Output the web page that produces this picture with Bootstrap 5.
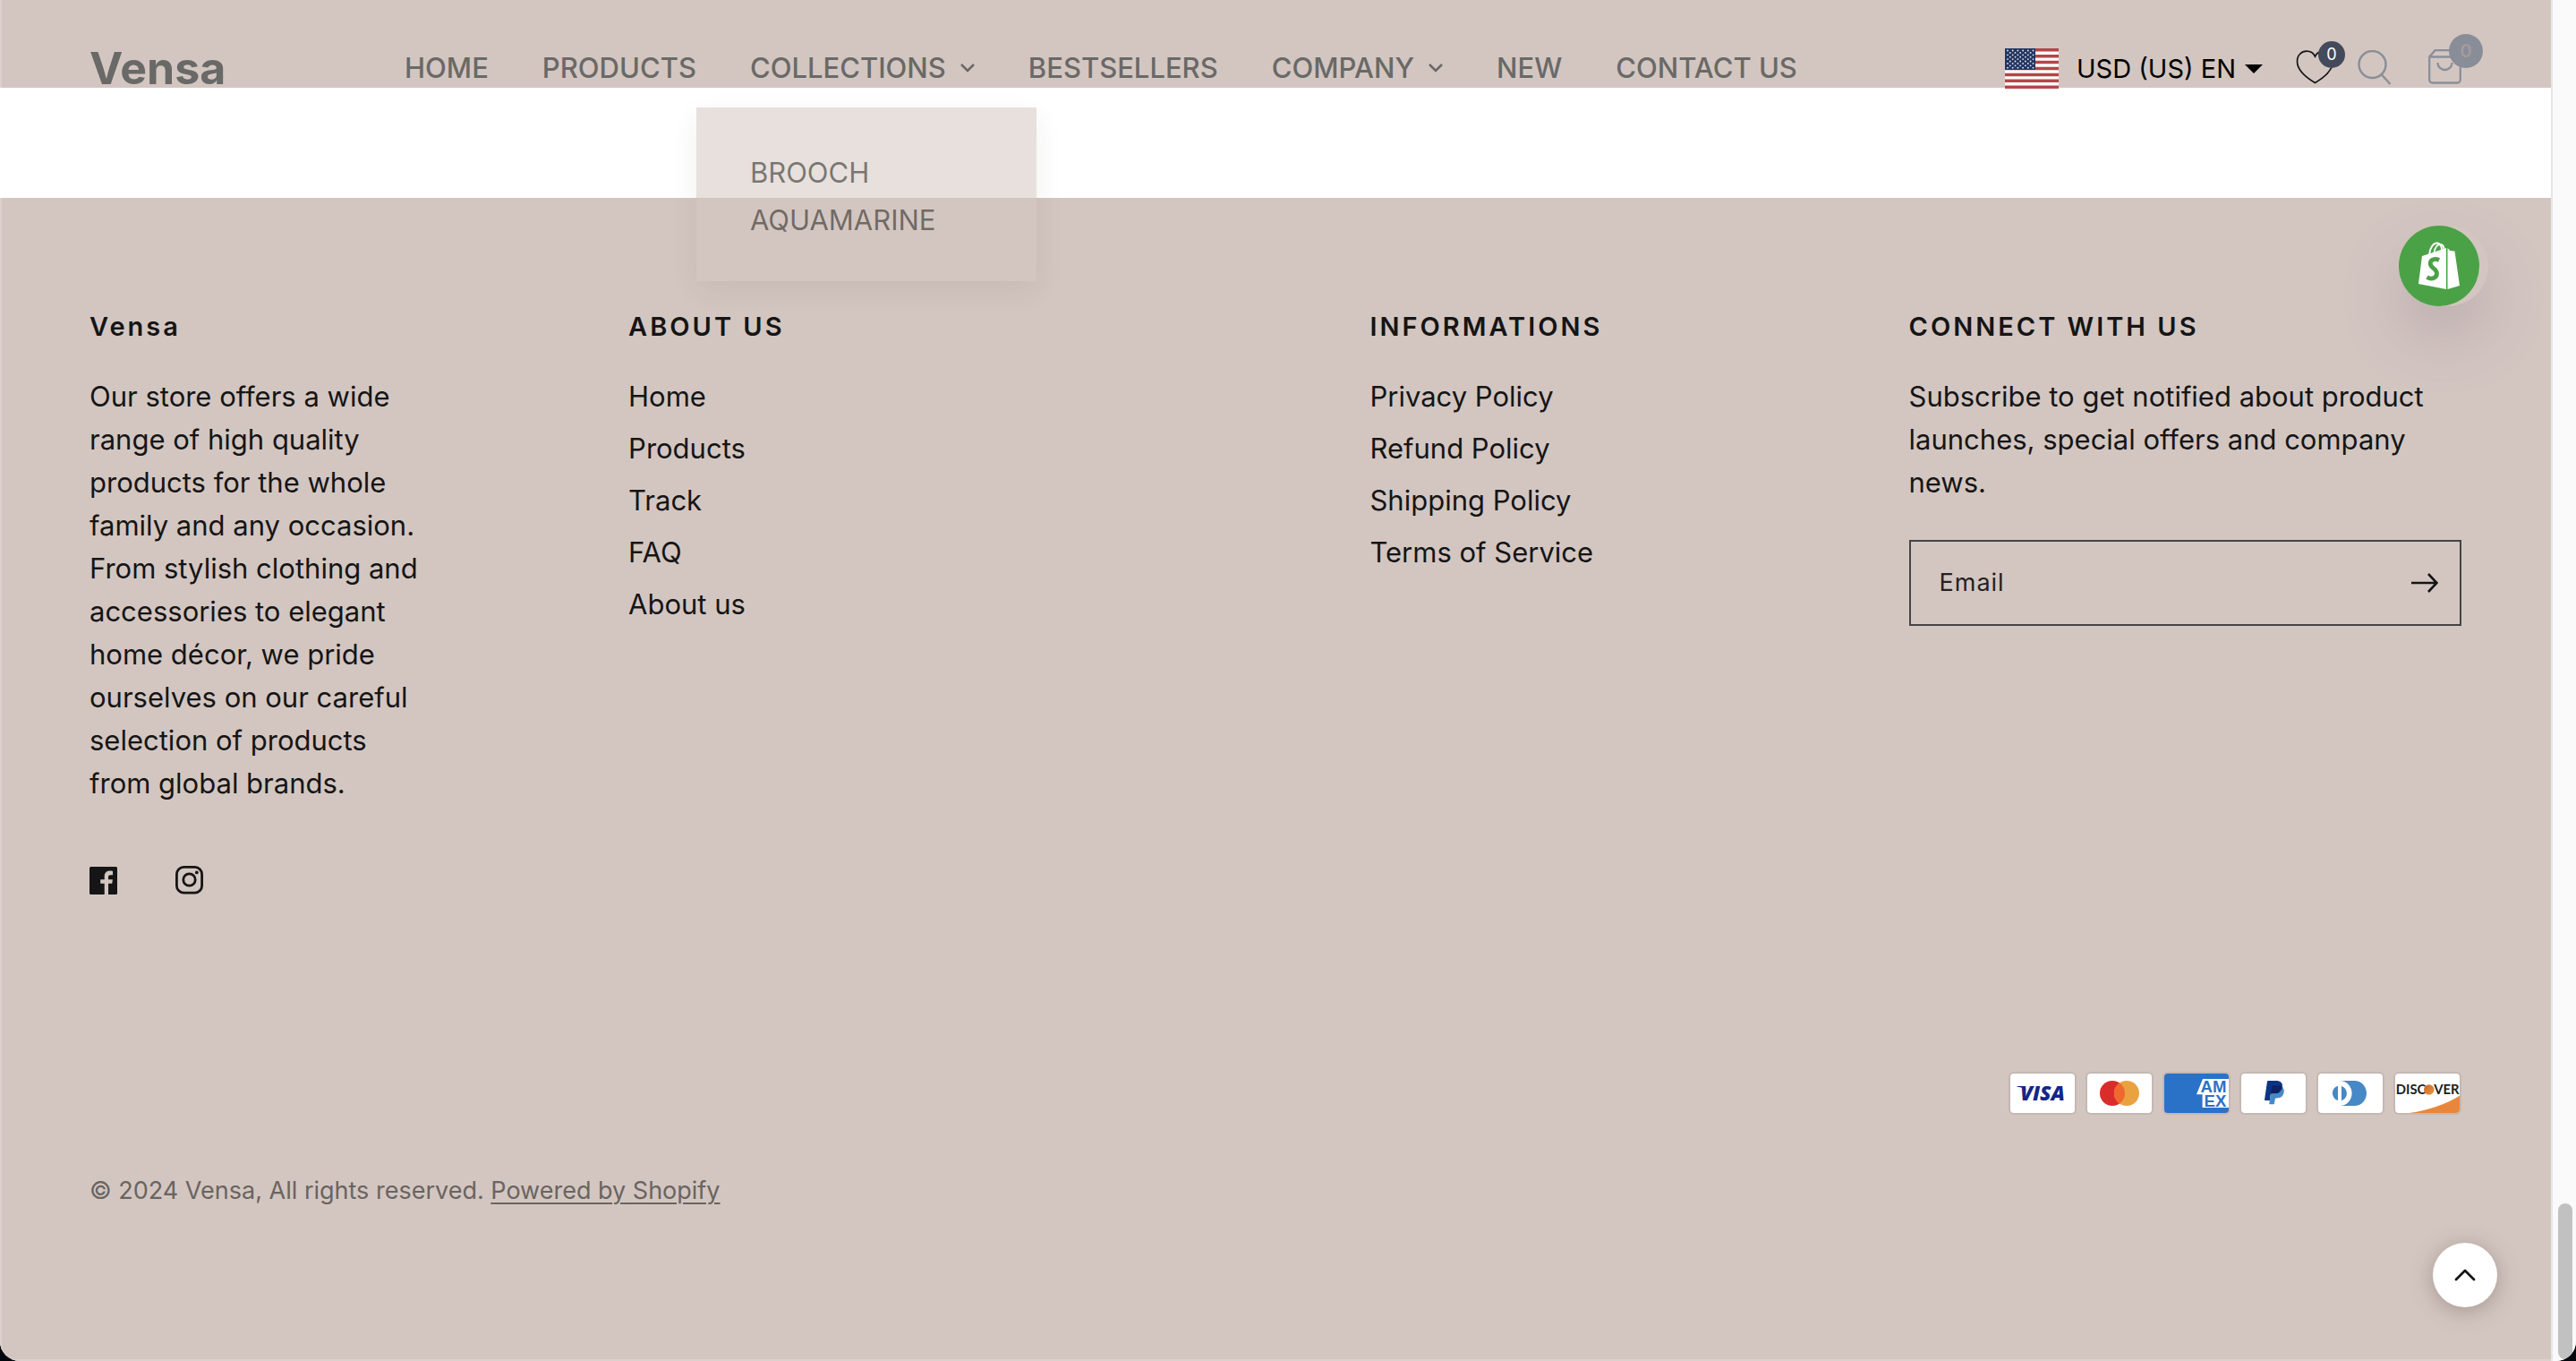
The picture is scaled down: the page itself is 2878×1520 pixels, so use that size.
<!DOCTYPE html>
<html lang="en">
<head>
<meta charset="utf-8">
<meta name="viewport" content="width=device-width, initial-scale=1">
<title>Vensa</title>
<link href="https://cdn.jsdelivr.net/npm/bootstrap@5.3.0/dist/css/bootstrap.min.css" rel="stylesheet">
<style>
  :root { --sand: #d3c6c1; --ink: #151515; --muted-ink: #696967; --edge: #dcd1cd; }
  body { background: #00070d; color: var(--ink); font-family: Inter, "Open Sans", sans-serif; font-size: 31px; line-height: 48px; }
  a { color: inherit; text-decoration: none; }
  svg { display: block; flex: none; }
  .shell { min-height: 100vh; border-radius: 0 0 22px 22px; background: #fff; overflow: hidden; }
  .site-top { height: 98px; padding: 54px 75px 0 98px; background: var(--sand); border-left: 2px solid var(--edge); color: var(--muted-ink); z-index: 5; }
  .site-top > * { height: 44px; }
  .site-logo { font-size: 50px; font-weight: 700; width: 352px; }
  .main-menu { gap: 60px; font-weight: 500; }
  .main-menu a, .main-menu button { white-space: nowrap; }
  .plain-btn { border: 0; background: none; padding: 0; color: inherit; font: inherit; }
  .sub-menu { display: block; position: absolute; left: -60px; top: 68px; width: 380px; margin: 0; padding: 46px 60px 42px; border: 0; border-radius: 0;
    background: rgba(211, 198, 193, .55); box-shadow: 0 10px 30px rgba(60, 40, 30, .07); color: rgba(25, 25, 20, .55); font-size: 31px; font-weight: 400; line-height: 53px; }
  .locale { color: #000; font-size: 29px; }
  .locale select { appearance: none; border: 0; background: none; padding: 0; color: inherit; line-height: 40px; width: 188px; margin-left: 20px; }
  .wish-btn { margin: 2px 0 0 37px; }
  .find-btn { margin: 2px 0 0 25px; }
  .cart-btn { margin: 1px 25px 0 41px; }
  .count-dot { position: absolute; border-radius: 50%; display: flex; align-items: center; justify-content: center; }
  .wish-dot { left: 25px; top: -10px; width: 30px; height: 30px; background: #434a5b; color: #fff; font-size: 18px; }
  .cart-dot { left: 23px; top: -17px; width: 38px; height: 38px; background: #898d97; color: #a39b9d; font-size: 20px; font-weight: 600; }
  .blank-band { height: 123px; }
  .site-foot { background: var(--sand); border-left: 2px solid var(--edge); border-bottom: 2px solid var(--edge); padding: 126px 100px 60px 98px; }
  .fcol-a, .fcol-c { width: 22.72%; }
  .fcol-b { width: 31.26%; }
  .fcol-d { width: 23.3%; }
  .site-foot h2 { font-size: 29px; font-weight: 600; line-height: 36px; letter-spacing: 3px; margin-bottom: 36px; }
  .story { max-width: 380px; margin-bottom: 68px; }
  .link-stack { gap: 10px; }
  .socials { gap: 65px; }
  .mail-box { margin-top: 40px; height: 96px; border: 2px solid #444; padding: 0 24px 0 32px; }
  .mail-box input { border: 0; background: none; outline: 0; min-width: 0; font-size: 27px; letter-spacing: 1px; padding: 0; color: var(--ink); }
  .mail-box input::placeholder { color: #222; opacity: 1; }
  .pay-row { gap: 10px; margin-top: 198px; margin-bottom: 64px; }
  .legal { font-size: 27px; line-height: 42px; color: #6a645f; }
  .legal a { text-decoration: underline; text-decoration-thickness: 2px; text-underline-offset: 4px; }
  .shop-bubble { position: absolute; right: 70px; top: 252px; width: 100px; height: 90px; border-radius: 45px; box-shadow: 0 34px 64px rgba(140, 120, 140, .3); z-index: 6; }
  .shop-bubble button { width: 90px; height: 90px; border-radius: 50%; background: #4ba246; }
  .to-top { position: fixed; right: 88px; bottom: 60px; width: 72px; height: 72px; border-radius: 50%; background: #fff; box-shadow: 0 4px 24px rgba(80, 60, 50, .35); z-index: 6; }
  .scroll-rail { width: 28px; background: #fafafa; border-left: 2px solid #e6e6e6; padding: 0 4px 2px 6px; }
  .scroll-thumb { height: 174px; border-radius: 8px; background: #c1c1c1; }
</style>
</head>
<body>
<div class="shell d-flex">
  <div class="position-relative flex-grow-1 d-flex flex-column">

    <header class="site-top position-relative d-flex align-items-start">
      <a class="site-logo d-flex align-items-center" href="#">Vensa</a>
      <nav class="main-menu d-flex align-items-center" aria-label="Main">
        <a href="#">HOME</a>
        <a href="#">PRODUCTS</a>
        <div class="position-relative">
          <button class="plain-btn d-flex align-items-center" type="button" aria-expanded="true">COLLECTIONS
            <svg class="ms-3" width="16" height="10" viewBox="0 0 16 10" fill="none" stroke="currentColor" stroke-width="2.6"><path d="M1 1l7 7 7-7"/></svg></button>
          <div class="sub-menu">
            <a class="d-block" href="#">BROOCH</a>
            <a class="d-block" href="#">AQUAMARINE</a>
          </div>
        </div>
        <a href="#">BESTSELLERS</a>
        <button class="plain-btn d-flex align-items-center" type="button">COMPANY
          <svg class="ms-3" width="16" height="10" viewBox="0 0 16 10" fill="none" stroke="currentColor" stroke-width="2.6"><path d="M1 1l7 7 7-7"/></svg></button>
        <a href="#">NEW</a>
        <a href="#">CONTACT US</a>
      </nav>

      <div class="d-flex align-items-start ms-auto">
        <div class="locale d-flex align-items-center">
          <svg width="60" height="45" viewBox="0 0 60 45" aria-hidden="true">
            <rect width="60" height="45" fill="#fff"/>
            <path d="M0 1.750h60M0 8.700h60M0 15.600h60M0 22.500h60M0 29.400h60M0 36.300h60M0 43.250h60" stroke="#b24648" stroke-width="3.460"/>
            <rect width="34" height="24" fill="#24365f"/>
            <g stroke="#e8ebf2" stroke-width="1.800" stroke-linecap="round" stroke-dasharray="0 5.700"><path d="M3 2.500h30M3 7.300h30M3 12.100h30M3 16.900h30M3 21.700h30"/><path d="M5.800 4.900h26M5.800 9.700h26M5.800 14.500h26M5.800 19.300h26"/></g>
          </svg>
          <select id="locale" aria-label="Currency and language"><option>USD (US) EN</option></select>
          <svg width="20" height="10" viewBox="0 0 20 10"><path d="M0 0h20L10 10z"/></svg>
        </div>
        <button class="wish-btn plain-btn position-relative" type="button" aria-label="Wishlist">
          <svg width="42" height="38" viewBox="0 0 42 38" fill="none" stroke="#151515" stroke-width="1.700"><path d="M21.500 36.500C13 31.500 1.500 23.500 1.500 12.500 1.500 5.500 6.500 1.200 12 1.200c4 0 7.500 1.800 9.500 5.800 2-4 5.500-5.800 9.500-5.800 5.500 0 10.500 4.300 10.500 11.300 0 11-11.500 19-20 24z"/></svg>
          <span class="count-dot wish-dot">0</span>
        </button>
        <button class="find-btn plain-btn" type="button" aria-label="Search">
          <svg width="40" height="40" viewBox="0 0 40 40" fill="none" stroke="#8a8f99" stroke-width="2.500"><circle cx="18.500" cy="16" r="15"/><path d="M28.500 27l10 11"/></svg>
        </button>
        <button class="cart-btn plain-btn position-relative" type="button" aria-label="Cart">
          <svg width="37" height="39" viewBox="0 0 37 39" fill="none" stroke="#8a8f99" stroke-width="2.300"><path d="M1.200 8.500v25.500a3.500 3.500 0 003.500 3.500h27.600a3.500 3.500 0 003.500-3.500V8.500L30 1.200H7.500zM1.200 8.500h34.600M10.500 15a8 8 0 0016 0"/></svg>
          <span class="count-dot cart-dot">0</span>
        </button>
      </div>
    </header>

    <main class="blank-band"></main>

    <footer class="site-foot flex-grow-1">
      <div class="d-flex align-items-start">
        <section class="fcol-a">
          <h2>Vensa</h2>
          <p class="story">Our store offers a wide range of high quality products for the whole family and any occasion. From stylish clothing and accessories to elegant home décor, we pride ourselves on our careful selection of products from global brands.</p>
          <div class="socials d-flex">
            <a href="#" aria-label="Facebook"><svg width="31" height="32" viewBox="0 0 31 32"><path fill="#151515" fill-rule="evenodd" d="M1.500 1h28A1.500 1.500 0 0131 2.500v28a1.500 1.500 0 01-1.500 1.500H21V19.800h4.200l.7-4.500H21v-2.800c0-1.500.8-2.300 2.400-2.300H26V5.900c-1-.3-2-.4-3.200-.4-4 0-6.100 2.500-6.100 6.300v3.500h-4.500v4.500h4.500V32H1.500A1.500 1.500 0 010 30.500v-28A1.500 1.500 0 011.500 1z"/></svg></a>
            <a href="#" aria-label="Instagram"><svg width="31" height="32" viewBox="0 0 31 32" fill="none" stroke="#151515" stroke-width="2.800"><rect x="1.400" y="1.400" width="28.200" height="28.800" rx="8"/><circle cx="15.500" cy="15.500" r="6.700"/><circle cx="23.800" cy="7.400" r="1.900" fill="#151515" stroke="none"/></svg></a>
          </div>
        </section>
        <section class="fcol-b">
          <h2>ABOUT US</h2>
          <div class="link-stack d-flex flex-column align-items-start">
            <a href="#">Home</a><a href="#">Products</a><a href="#">Track</a><a href="#">FAQ</a><a href="#">About us</a>
          </div>
        </section>
        <section class="fcol-c">
          <h2>INFORMATIONS</h2>
          <div class="link-stack d-flex flex-column align-items-start">
            <a href="#">Privacy Policy</a><a href="#">Refund Policy</a><a href="#">Shipping Policy</a><a href="#">Terms of Service</a>
          </div>
        </section>
        <section class="fcol-d">
          <h2>CONNECT WITH US</h2>
          <p class="mb-0">Subscribe to get notified about product launches, special offers and company news.</p>
          <form class="mail-box d-flex align-items-center">
            <input class="flex-grow-1" type="email" placeholder="Email" aria-label="Email">
            <button class="plain-btn" type="button" aria-label="Subscribe"><svg width="30" height="22" viewBox="0 0 30 22" fill="none" stroke="#151515" stroke-width="2.600"><path d="M0 11h28M19 1l9.500 10L19 21"/></svg></button>
          </form>
        </section>
      </div>

      <div class="pay-row d-flex justify-content-end">
        <svg width="76" height="48" viewBox="0 0 38 24" role="img" aria-label="Visa"><rect width="38" height="24" rx="3" opacity=".07"/><rect x="1" y="1" width="36" height="22" rx="2" fill="#fff"/><text x="6.500" y="16" font-family="Open Sans, sans-serif" font-size="11.400" font-weight="800" font-style="italic" fill="#142688">VISA</text><path d="M4.800 8h4.400l.6 2.400C8.500 9 7 8.600 4.800 8.400z" fill="#142688"/></svg>
        <svg width="76" height="48" viewBox="0 0 38 24" role="img" aria-label="Mastercard"><rect width="38" height="24" rx="3" opacity=".07"/><rect x="1" y="1" width="36" height="22" rx="2" fill="#fff"/><circle cx="15" cy="12" r="7" fill="#d92d2c"/><circle cx="23" cy="12" r="7" fill="#eaa241"/><path fill="#ef692f" d="M22 12c0-2.400-1.200-4.500-3-5.700-1.800 1.300-3 3.400-3 5.700s1.200 4.500 3 5.700c1.800-1.200 3-3.300 3-5.700z"/></svg>
        <svg width="76" height="48" viewBox="0 0 38 24" role="img" aria-label="American Express"><defs><clipPath id="axp"><rect x="1" y="1" width="36" height="22" rx="2"/></clipPath></defs><rect width="38" height="24" rx="3" opacity=".07"/><g clip-path="url(#axp)"><rect width="38" height="24" fill="#2a72c8"/><path d="M19 12.600L22.500 4h14.500v16H22.300v-7.400z" fill="#fff"/><g font-family="Liberation Sans, sans-serif" font-size="9.300" font-weight="700" fill="#2a72c8"><text x="21.300" y="11.600">AM</text><text x="23.300" y="19.300">EX</text></g></g></svg>
        <svg width="76" height="48" viewBox="0 0 38 24" role="img" aria-label="PayPal"><rect width="38" height="24" rx="3" opacity=".07"/><rect x="1" y="1" width="36" height="22" rx="2" fill="#fff"/><path fill="#0a3585" d="M23.900 8.300c.2-1 0-1.700-.6-2.300-.6-.7-1.700-1-3.100-1h-4.100c-.3 0-.5.2-.6.5L14 15.600c0 .2.1.4.3.4H17l.4-3.400 1.800-2.200 4.700-2.100z"/><path fill="#4788c6" d="M23.900 8.300l-.2.2c-.5 2.800-2.200 3.800-4.600 3.800H18c-.3 0-.5.2-.6.5l-.6 3.900-.2 1c0 .2.1.4.3.4H19c.3 0 .5-.2.5-.4v-.1l.4-2.400v-.1c0-.2.3-.4.5-.4h.3c2.100 0 3.700-.8 4.100-3.200.2-1 .1-1.800-.4-2.400-.1-.5-.3-.7-.5-.8z"/><path fill="#0b2265" d="M23.300 8.100c-.1-.1-.2-.1-.3-.1-.1 0-.2 0-.3-.1-.3-.1-.7-.1-1.100-.1h-3c-.1 0-.2 0-.2.1-.2.1-.3.2-.3.4l-.7 4.400v.1c0-.3.3-.5.6-.5h1.300c2.500 0 4.100-1 4.600-3.800v-.2c-.1-.1-.3-.2-.5-.2h-.1z"/></svg>
        <svg width="76" height="48" viewBox="0 0 38 24" role="img" aria-label="Diners Club"><rect width="38" height="24" rx="3" opacity=".07"/><rect x="1" y="1" width="36" height="22" rx="2" fill="#fff"/><path fill="#4788c6" d="M12 12v3.700c0 .3-.2.3-.5.2-1.900-.8-3-3.300-2.300-5.400.4-1.100 1.200-2 2.300-2.400.4-.2.5-.1.5.2V12zm2 0V8.300c0-.3 0-.3.3-.2 2.100.8 3.200 3.300 2.400 5.400-.4 1.100-1.200 2-2.300 2.400-.4.2-.4.1-.4-.2V12zm7.200-7H13c3.800 0 6.800 3.100 6.800 7s-3 7-6.800 7h8.200c3.800 0 6.800-3.100 6.800-7s-3-7-6.800-7z"/></svg>
        <svg width="76" height="48" viewBox="0 0 38 24" role="img" aria-label="Discover"><defs><linearGradient id="dsc" x1="0" y1="0" x2="1" y2="1"><stop offset="0" stop-color="#c9622f"/><stop offset="1" stop-color="#eb9a3c"/></linearGradient></defs><rect width="38" height="24" rx="3" opacity=".07"/><rect x="1" y="1" width="36" height="22" rx="2" fill="#fff"/><path d="M9 23c11-1.500 20-4.800 28-9.600V21a2 2 0 01-2 2z" fill="#e8873c"/><g font-family="Lato, sans-serif" font-size="7.400" font-weight="700" fill="#1d1d1b"><text x="1.400" y="12.600">DISC</text><text x="22.600" y="12.600">VER</text></g><circle cx="19.900" cy="10" r="2.900" fill="url(#dsc)"/></svg>
      </div>

      <p class="legal mb-0">© 2024 Vensa, All rights reserved. <a href="#">Powered by Shopify</a></p>
    </footer>

    <div class="shop-bubble">
      <button class="plain-btn d-flex align-items-center justify-content-center" type="button" aria-label="Shop chat">
        <svg width="46" height="54" viewBox="0 0 46 54"><path fill="#fff" d="M4 16l9-3 18-6v46L0 47zM32.500 7l3 3 5 .5L46 49l-13.500 4z"/><path fill="none" stroke="#fff" stroke-width="1.900" d="M12 14C13 6 17 1 21 1.500c3.500.5 5 4 5 8M17.500 12c1-6 4-9.500 7.500-9 2.500.5 3.500 3 3.500 5.500"/><path fill="none" stroke="#4ba246" stroke-width="4.800" d="M23 20.500c-5-2.500-9.800-.2-9.800 3.800 0 5.400 7.300 5.400 7.300 11 0 5-5.500 7.500-11 4.200"/></svg>
      </button>
    </div>
  </div>

  <aside class="scroll-rail d-flex flex-column justify-content-end" aria-hidden="true"><div class="scroll-thumb"></div></aside>
</div>

<button class="to-top plain-btn d-flex align-items-center justify-content-center" type="button" aria-label="Back to top">
  <svg width="24" height="14" viewBox="0 0 24 14" fill="none" stroke="#151515" stroke-width="2.800" stroke-linecap="round" stroke-linejoin="round"><path d="M2 12L12 2l10 10"/></svg>
</button>
<script src="https://cdn.jsdelivr.net/npm/bootstrap@5.3.0/dist/js/bootstrap.bundle.min.js"></script>
</body>
</html>
